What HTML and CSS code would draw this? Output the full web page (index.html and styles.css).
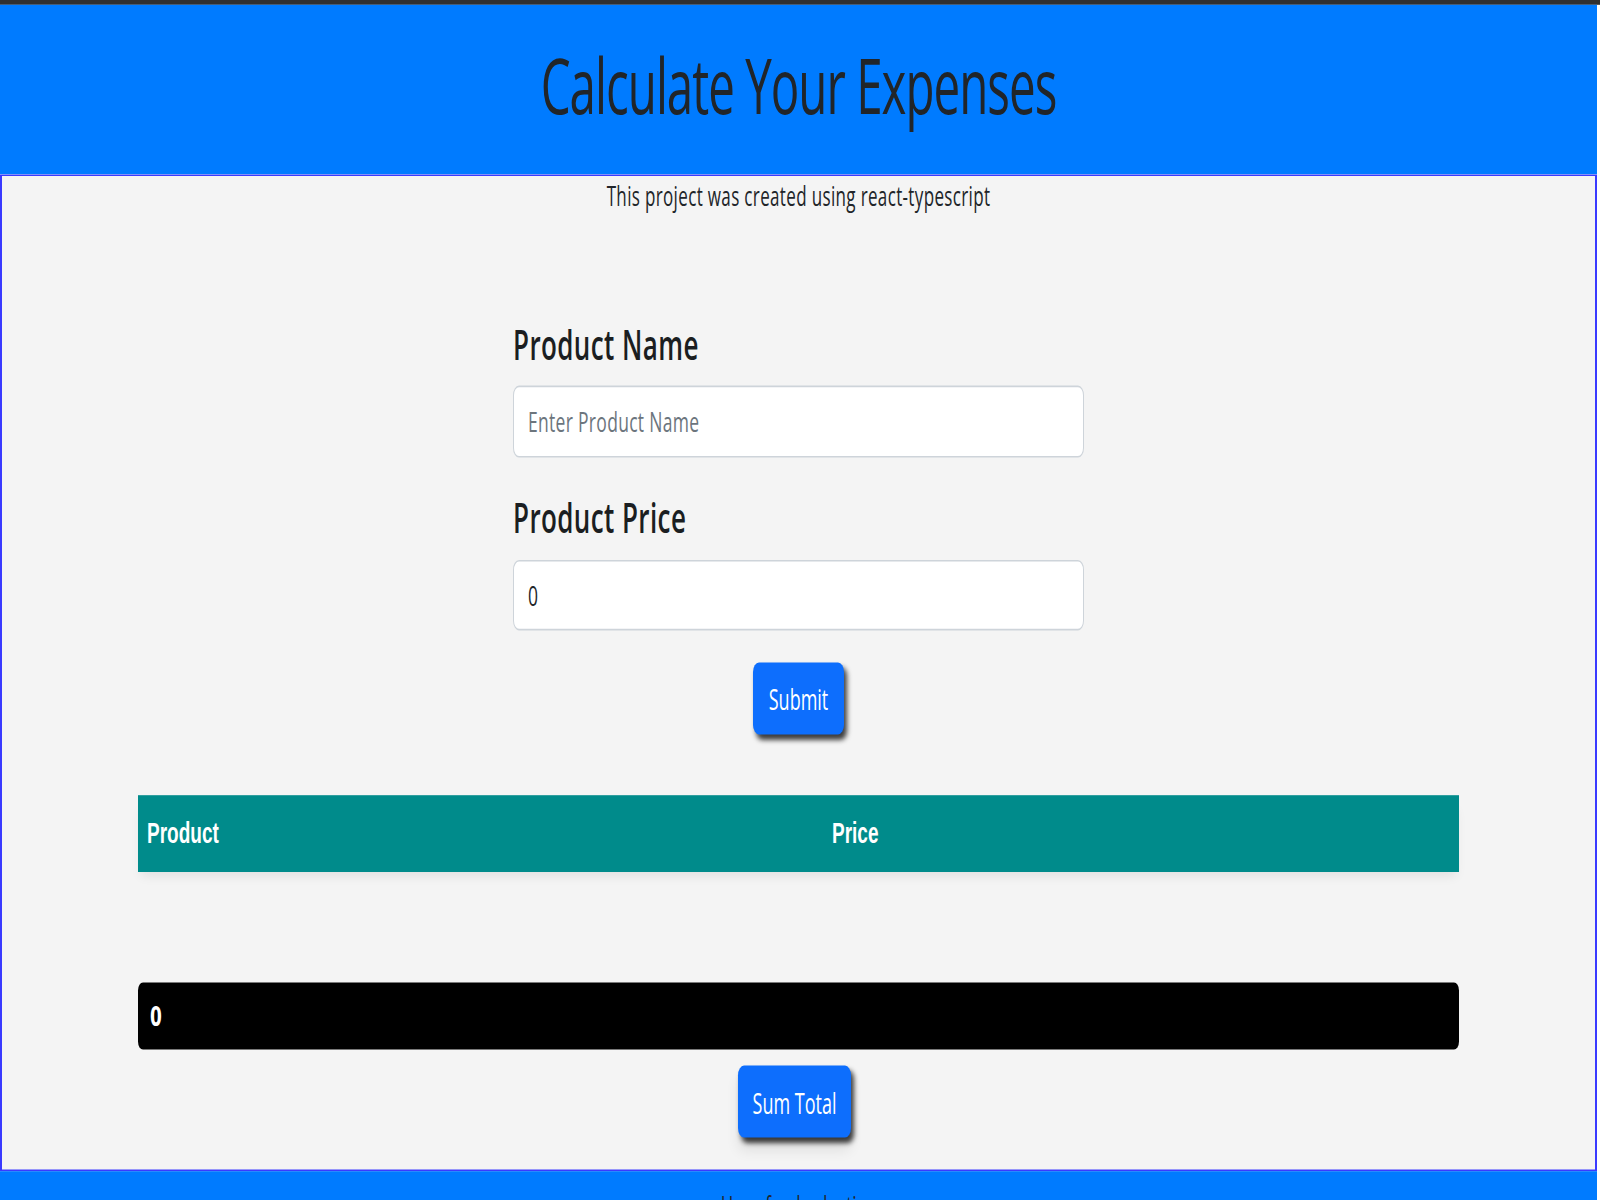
FILE: index.html
```html
<!DOCTYPE html>
<html lang="en">
<head>
<meta charset="utf-8">
<title>Calculate Your Expenses</title>
<link rel="stylesheet" href="styles.css">
</head>
<body>
<div class="viewport">
  <div class="page">
    <div class="topbar"></div>
    <header class="site-header">
      <h1 class="title">Calculate Your Expenses</h1>
    </header>
    <main class="panel">
      <p class="subtitle">This project was created using react-typescript</p>
      <form class="expense-form">
        <label class="field-label" for="productName">Product Name</label>
        <input id="productName" class="field-input" type="text" placeholder="Enter Product Name">
        <label class="field-label field-label-second" for="productPrice">Product Price</label>
        <input id="productPrice" class="field-input" type="text" value="0">
        <div class="actions actions-submit">
          <button type="button" class="btn">Submit</button>
        </div>
      </form>
      <table class="expense-table">
        <thead>
          <tr><th class="col-product">Product</th><th class="col-price">Price</th></tr>
        </thead>
        <tbody></tbody>
      </table>
      <div class="total-bar">0</div>
      <div class="actions actions-sum">
        <button type="button" class="btn btn-sum">Sum Total</button>
      </div>
    </main>
    <footer class="site-footer">Have fun budgeting</footer>
  </div>
</div>
</body>
</html>
```

FILE: styles.css
```css
html, body {
  margin: 0;
  padding: 0;
  background: #ffffff;
}

.viewport {
  width: 1600px;
  height: 1200px;
  overflow: hidden;
}

.page {
  width: 1600px;
  height: 750px;
  overflow: hidden;
  transform: scaleY(1.6);
  transform-origin: 0 0;
  font-family: "Open Sans", "Noto Sans", sans-serif;
  color: #212529;
}

.topbar {
  height: 3px;
  background: #303030;
}

.site-header {
  box-sizing: border-box;
  width: 1597px;
  height: 105.75px;
  padding-top: 20.7px;
  background: #007bff;
  text-align: center;
}

.title {
  margin: 0;
  font-size: 47.5px;
  line-height: 57px;
  font-weight: 500;
  letter-spacing: -1px;
  color: #212529;
}

.panel {
  box-sizing: border-box;
  width: 1597px;
  height: 622.85px;
  background: #f4f4f4;
  border-style: solid;
  border-color: #3a3aff;
  border-width: 1px 2px;
  display: flex;
  flex-direction: column;
  align-items: center;
}

.subtitle {
  margin: 1px 0 0;
  font-size: 17px;
  line-height: 24px;
  letter-spacing: 0.35px;
}

.expense-form {
  width: 571px;
  display: flex;
  flex-direction: column;
}

.field-label {
  display: block;
  margin: 64.15px 0 10.35px;
  font-size: 26px;
  line-height: 32px;
  font-weight: 600;
  letter-spacing: 0.4px;
  color: #1b1e21;
}

.field-label-second {
  margin: 21.3px 0 11.1px;
}

.field-input {
  box-sizing: border-box;
  width: 571px;
  height: 44.35px;
  margin: 0;
  padding: 0 14px;
  border: 1px solid #ced4da;
  border-radius: 6px;
  background: #ffffff;
  font-family: "Open Sans", "Noto Sans", sans-serif;
  font-size: 17.5px;
  letter-spacing: 0.3px;
  color: #212529;
  outline: none;
}

.field-input::placeholder {
  color: #6c757d;
}

.actions {
  display: flex;
  justify-content: center;
}

.actions-submit {
  margin-top: 19.4px;
}

.btn {
  box-sizing: border-box;
  height: 45.65px;
  padding: 0 16px;
  border: none;
  border-radius: 6px;
  background: #0d6efd;
  color: #ffffff;
  font-family: "Open Sans", "Noto Sans", sans-serif;
  font-size: 18px;
  box-shadow: 3px 3px 4px rgba(0, 0, 0, 0.75);
  cursor: pointer;
}

.expense-table {
  width: 1321px;
  margin-top: 38.1px;
  border-collapse: collapse;
  box-shadow: 0 6px 8px -3px rgba(0, 0, 0, 0.08);
  font-family: "Liberation Sans", Arial, sans-serif;
}

.expense-table th {
  box-sizing: border-box;
  height: 47.5px;
  padding: 0 9px;
  background: #008b8b;
  color: #ffffff;
  text-align: left;
  font-size: 19px;
  font-weight: 700;
}

.col-product {
  width: 685px;
}

.total-bar {
  box-sizing: border-box;
  width: 1321px;
  height: 42.5px;
  margin-top: 68.75px;
  padding: 0 12px;
  border-radius: 5px;
  background: #000000;
  color: #ffffff;
  font-family: "DejaVu Sans", sans-serif;
  font-weight: 700;
  font-size: 17px;
  line-height: 42.5px;
}

.actions-sum {
  margin-top: 10px;
}

.btn-sum {
  height: 45px;
  margin-right: 8px;
  padding: 0 15px;
  box-shadow: 3px 3px 4px rgba(0, 0, 0, 0.75), 0 8px 10px rgba(0, 0, 0, 0.08);
}

.site-footer {
  box-sizing: border-box;
  width: 1597px;
  height: 18.4px;
  padding-top: 10.6px;
  background: #007bff;
  text-align: center;
  font-size: 17px;
  line-height: 24px;
  color: #212529;
}
```
